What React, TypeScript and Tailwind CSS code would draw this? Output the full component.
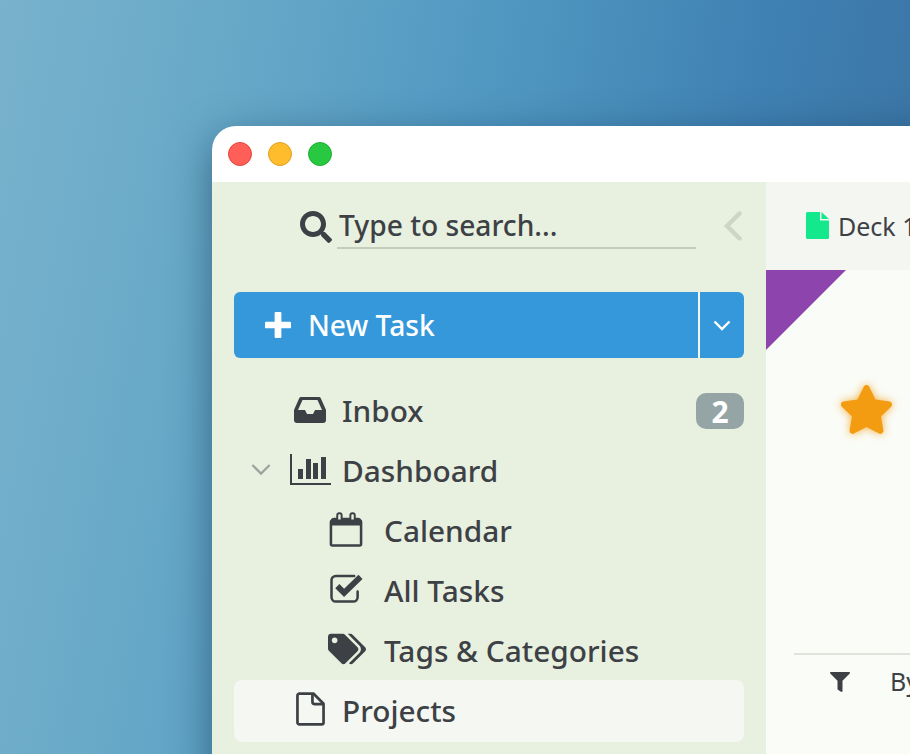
import React from "react";
import { FaTags, FaFilter, FaStar, FaSearch } from "react-icons/fa";

const font = "font-['Noto_Sans',sans-serif]";

function ChartIcon() {
  return (
    <svg className="mb-[4px] ml-[1px] shrink-0" width="41" height="31" viewBox="0 0 41 31" fill="#3d4145">
      <rect x="0" y="0" width="2" height="31" />
      <rect x="0" y="29" width="41" height="2" />
      <rect x="8" y="15" width="5" height="10" />
      <rect x="16" y="5" width="5" height="20" />
      <rect x="23" y="9" width="5" height="16" />
      <rect x="31" y="3" width="5" height="22" />
    </svg>
  );
}

function InboxIcon() {
  return (
    <svg className="mb-[2px]" width="32" height="28" viewBox="0 0 32 28">
      <path fillRule="evenodd" fill="#3d4145" d="M7 1h18a2 2 0 0 1 1.800 1.200L32 14v10a3 3 0 0 1-3 3H3a3 3 0 0 1-3-3V14L5.200 2.200A2 2 0 0 1 7 1zM8.500 4L4 14h7l2 4h6l2-4h7L23.500 4z" />
    </svg>
  );
}

function CalendarIcon() {
  return (
    <svg className="mb-[3px]" width="34" height="35" viewBox="0 0 34 36" fill="none">
      <path d="M2.500 9h29a1 1 0 0 1 1 1v23a1.500 1.500 0 0 1-1.500 1.500H3A1.500 1.500 0 0 1 1.500 33V10a1 1 0 0 1 1-1z" stroke="#3d4145" strokeWidth="2.600" />
      <path d="M1 10a4 4 0 0 1 4-4h3v4h4V6h10v4h4V6h3a4 4 0 0 1 4 4v4H1z" fill="#3d4145" />
      <rect x="8" y="1.200" width="4.500" height="9" rx="2" fill="none" stroke="#3d4145" strokeWidth="2" />
      <rect x="21.500" y="1.200" width="4.500" height="9" rx="2" fill="none" stroke="#3d4145" strokeWidth="2" />
    </svg>
  );
}

function CheckIcon() {
  return (
    <svg className="mb-[6px]" width="33" height="29" viewBox="0 0 34 30" fill="none">
      <path d="M25 2H6a4.500 4.500 0 0 0-4.500 4.500V24A4.500 4.500 0 0 0 6 28.500h18a4.500 4.500 0 0 0 4.500-4.500V18" stroke="#3d4145" strokeWidth="2.600" strokeLinecap="round" />
      <path d="M7.500 12.500l7 7L31.500 3" stroke="#3d4145" strokeWidth="6" />
    </svg>
  );
}

function PageIcon() {
  return (
    <svg className="mb-[4px]" width="29" height="34" viewBox="0 0 30 35" fill="none">
      <path d="M3.500 1.500h14.500l10.500 10.500v19.500a2 2 0 0 1-2 2H3.500a2 2 0 0 1-2-2v-28a2 2 0 0 1 2-2z" stroke="#3d4145" strokeWidth="2.800" strokeLinejoin="round" />
      <path d="M17 2v8a2.500 2.500 0 0 0 2.500 2.500H28" stroke="#3d4145" strokeWidth="2.800" />
    </svg>
  );
}

function Row({ icon, label, chevron, badge, indent, active }: { icon: React.ReactNode; label: string; chevron?: boolean; badge?: string; indent?: boolean; active?: boolean }) {
  return (
    <div className={`flex h-[62px] -my-px items-center rounded-[8px] ${active ? "bg-[#f5f8f2]" : ""}`}>
      <div className="flex w-[56px] shrink-0 justify-start pb-[4px] pl-[17px]">
        {chevron && (
          <svg width="20" height="13" viewBox="0 0 22 14" fill="none">
            <path d="M1.500 2l9.500 9.500L20.500 2" stroke="#9aa39c" strokeWidth="2.400" />
          </svg>
        )}
      </div>
      <div className={`flex shrink-0 items-center justify-center ${indent ? "ml-[38px] w-[36px]" : "w-[40px]"}`}>{icon}</div>
      <span className={`text-[29.8px] leading-none font-medium text-[#3d4145] ${indent ? "ml-[20px]" : "ml-[12px]"}`}>{label}</span>
      {badge && (
        <span className="ml-auto flex h-[36px] w-[48px] items-center justify-center rounded-[10px] bg-[#95a5a6] text-[30px] font-bold text-white">{badge}</span>
      )}
    </div>
  );
}

export default function App() {
  return (
    <div className={`${font} h-[754px] w-[910px] overflow-hidden bg-[linear-gradient(100deg,#78b2cc_0%,#68a9c8_22%,#4f97c1_50%,#3f80b2_75%,#39709f_100%)] pt-[126px] pl-[212px]`}>
      <div className="flex h-[700px] w-[760px] flex-col overflow-hidden rounded-tl-[24px] bg-white shadow-[0_12px_40px_rgba(10,40,70,0.5)]">
        <div className="flex h-[56px] shrink-0 items-center gap-[16px] pl-[16px]">
          <span className="h-[24px] w-[24px] rounded-full border border-[#e2463f] bg-[#ff5f57]" />
          <span className="h-[24px] w-[24px] rounded-full border border-[#e1a020] bg-[#ffbd2e]" />
          <span className="h-[24px] w-[24px] rounded-full border border-[#1fae35] bg-[#28c840]" />
        </div>
        <div className="flex min-h-0 flex-1">
          <aside className="flex w-[554px] shrink-0 flex-col bg-[#e8f0e0] px-[22px]">
            <div className="flex h-[110px] shrink-0 items-start">
              <div className="mt-[27px] ml-[66px] flex h-[40px] w-[396px] items-start">
                <FaSearch className="mt-[2px] h-[32px] w-[32px] shrink-0 text-[#3d4145]" />
                <div className="ml-[5px] h-[40px] w-[359px] border-b-2 border-[#c4ccbc]">
                  <span className="block pl-[2px] text-[28.2px] leading-[32px] font-medium whitespace-nowrap text-[#3d4145]">Type to search...</span>
                </div>
              </div>
              <svg className="mt-[29px] ml-[27px]" width="20" height="30" viewBox="0 0 20 30" fill="none">
                <path d="M16.500 2.500L4 15l12.500 12.500" stroke="#cdd5c6" strokeWidth="4.400" strokeLinecap="round" />
              </svg>
            </div>
            <div className="flex h-[66px] shrink-0 overflow-hidden rounded-[6px] bg-[#3498db] text-white">
              <div className="flex flex-1 items-center pl-[31px]">
                <svg width="26" height="26" viewBox="0 0 27 27" fill="white">
                  <rect x="10" y="0" width="7" height="27" rx="1" />
                  <rect x="0" y="10" width="27" height="7" rx="1" />
                </svg>
                <span className="ml-[17px] text-[28.2px] font-medium">New Task</span>
              </div>
              <div className="w-[2px] bg-[#f2f7ee]" />
              <div className="flex w-[44px] items-center justify-center">
                <svg width="18" height="11" viewBox="0 0 18 11" fill="none">
                  <path d="M1.500 1.500L9 9l7.500-7.500" stroke="white" strokeWidth="2.400" />
                </svg>
              </div>
            </div>
            <div className="mt-[23px] flex flex-col">
              <Row icon={<InboxIcon />} label="Inbox" badge="2" />
              <Row icon={<ChartIcon />} label="Dashboard" chevron />
              <Row icon={<CalendarIcon />} label="Calendar" indent />
              <Row icon={<CheckIcon />} label="All Tasks" indent />
              <Row icon={<FaTags className="mb-[4px] ml-[2px] h-[32px] w-[38px] shrink-0 text-[#3d4145]" />} label="Tags & Categories" indent />
              <Row icon={<PageIcon />} label="Projects" active />
            </div>
          </aside>
          <main className="flex min-w-0 flex-1 flex-col bg-[#fafcf7]">
            <div className="flex h-[88px] shrink-0 items-center bg-[#f4f6f1] pl-[40px]">
              <svg className="mb-[2px]" width="23" height="27" viewBox="0 0 23 27">
                <path d="M1.500 0H14v8.500h9V25.500a1.500 1.500 0 0 1-1.500 1.500h-20A1.500 1.500 0 0 1 0 25.500v-24A1.500 1.500 0 0 1 1.500 0z" fill="#13e88d" />
                <path d="M15.500 0l7.500 7h-7.500z" fill="#13e88d" />
              </svg>
              <span className="mt-[2px] ml-[9px] text-[25px] whitespace-nowrap text-[#3d4145]">Deck 1</span>
            </div>
            <div className="relative flex min-h-0 flex-1 flex-col">
              <div className="absolute top-0 left-0 h-[80px] w-[80px] bg-[#8e44ad] [clip-path:polygon(0_0,100%_0,0_100%)]" />
              <div className="mt-[113px] ml-[73px] h-[53px]">
                <FaStar className="h-[53px] w-[55px] text-[#f39c12] drop-shadow-[0_0_4px_rgba(243,156,18,0.8)]" />
              </div>
              <div className="mt-[217px] ml-[28px] h-[2px] bg-[#e0e3dc]" />
              <div className="flex items-center pt-[8px] pl-[64px]">
                <FaFilter className="h-[20px] w-[20px] text-[#3d4145]" />
                <span className="ml-[40px] text-[25px] whitespace-nowrap text-[#3d4145]">By</span>
              </div>
            </div>
          </main>
        </div>
      </div>
    </div>
  );
}
